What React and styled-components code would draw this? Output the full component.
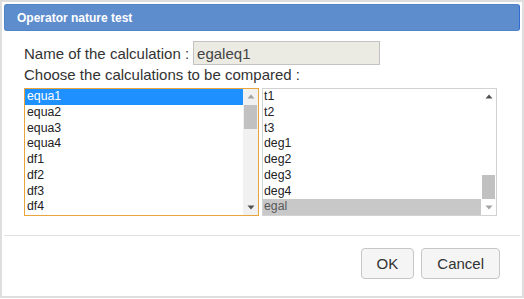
import React from 'react';
import styled, { createGlobalStyle } from 'styled-components';

const GlobalStyle = createGlobalStyle`
  html, body { margin: 0; padding: 0; background: #fff; }
  body { font-family: "Liberation Sans", Arial, sans-serif; }
  #root { width: 524px; height: 299px; }
`;

const Dialog = styled.div`
  box-sizing: border-box;
  width: 524px;
  height: 298px;
  border: 2px solid #dedede;
  padding: 2px;
  background: #fff;
  display: flex;
  flex-direction: column;
`;

const TitleBar = styled.div`
  box-sizing: border-box;
  height: 27px;
  background: #5e8dce;
  border: 1px solid #5284c9;
  border-right-color: #2f6dd0;
  border-radius: 3px;
  padding-left: 12px;
  display: flex;
  align-items: center;
  color: #fff;
  font-weight: bold;
  font-size: 12px;
`;

const Body = styled.div`
  padding: 10px 20px 0 20px;
  display: flex;
  flex-direction: column;
`;

const NameRow = styled.div`
  display: flex;
  align-items: center;
  height: 24px;
`;

const Label = styled.span`
  font-size: 15px;
  color: #333;
  line-height: 17px;
  white-space: nowrap;
`;

const ChooseLabel = styled(Label)`
  display: block;
  margin-top: 1px;
`;

const NameInput = styled.div`
  box-sizing: border-box;
  margin-left: 4px;
  width: 187px;
  height: 24px;
  border: 1px solid #c3c3c3;
  background: #ebebe4;
  font-size: 15px;
  color: #444;
  padding-left: 3px;
  display: flex;
  align-items: center;
`;

const ListsRow = styled.div`
  display: flex;
  gap: 3px;
  margin-top: 5px;
`;

const ListBox = styled.div`
  box-sizing: border-box;
  width: 235px;
  height: 128px;
  border: 1px solid ${p => (p.$focused ? '#e9a43c' : '#d2d2d2')};
  display: flex;
  background: #fff;
`;

const Items = styled.div`
  flex: 1;
  display: flex;
  flex-direction: column;
  overflow: hidden;
`;

const Item = styled.div`
  height: 15.75px;
  line-height: 15.75px;
  font-size: 12.3px;
  padding-left: ${p => p.$indent}px;
  white-space: nowrap;
  color: ${p => (p.$selected ? (p.$focused ? '#fff' : '#5a5a5a') : '#222')};
  background: ${p => (p.$selected ? (p.$focused ? '#1e90ff' : '#c8c8c8') : 'transparent')};
`;

const Scrollbar = styled.div`
  width: 15px;
  display: flex;
  flex-direction: column;
  background: ${p => (p.$focused ? '#f1f1f1' : '#fff')};
`;

const ArrowBtn = styled.div`
  height: 15px;
  display: flex;
  align-items: center;
  justify-content: center;
`;

const Track = styled.div`
  flex: 1;
  display: flex;
  flex-direction: column;
  justify-content: ${p => (p.$atEnd ? 'flex-end' : 'flex-start')};
  padding: 1px 0;
`;

const Thumb = styled.div`
  height: 24px;
  margin: 0 1px;
  background: #c1c1c1;
`;

const Separator = styled.div`
  height: 1px;
  background: #e2e2e2;
  margin-top: 19px;
`;

const Footer = styled.div`
  display: flex;
  justify-content: flex-end;
  gap: 7px;
  padding: 12px 20px 0 0;
`;

const Button = styled.button`
  box-sizing: border-box;
  height: 31px;
  padding: 0 15px;
  border: 1px solid #c6c6c6;
  border-radius: 4px;
  background: #f5f5f5;
  font-family: "Liberation Sans", Arial, sans-serif;
  font-size: 15px;
  color: #333;
`;

const Arrow = ({ up, dark }) => (
  <svg width="8" height="5" viewBox="0 0 8 5">
    <polygon
      points={up ? '0.5,4.5 7.5,4.5 4,0.5' : '0.5,0.5 7.5,0.5 4,4.5'}
      fill={dark ? '#505050' : '#a3a3a3'}
    />
  </svg>
);

const List = ({ items, selected, focused, atEnd, indent }) => (
  <ListBox $focused={focused}>
    <Items>
      {items.map(it => (
        <Item key={it} $indent={indent} $selected={it === selected} $focused={focused}>
          {it}
        </Item>
      ))}
    </Items>
    <Scrollbar $focused={focused}>
      <ArrowBtn>
        <Arrow up dark={atEnd} />
      </ArrowBtn>
      <Track $atEnd={atEnd}>
        <Thumb />
      </Track>
      <ArrowBtn>
        <Arrow dark={!atEnd} />
      </ArrowBtn>
    </Scrollbar>
  </ListBox>
);

export default function App() {
  return (
    <>
      <GlobalStyle />
      <Dialog>
        <TitleBar>Operator nature test</TitleBar>
        <Body>
          <NameRow>
            <Label>Name of the calculation :</Label>
            <NameInput>egaleq1</NameInput>
          </NameRow>
          <ChooseLabel>Choose the calculations to be compared :</ChooseLabel>
          <ListsRow>
            <List
              items={['equa1', 'equa2', 'equa3', 'equa4', 'df1', 'df2', 'df3', 'df4']}
              selected="equa1"
              focused
              indent={2}
            />
            <List
              items={['t1', 't2', 't3', 'deg1', 'deg2', 'deg3', 'deg4', 'egal']}
              selected="egal"
              atEnd
              indent={1}
            />
          </ListsRow>
        </Body>
        <Separator />
        <Footer>
          <Button>OK</Button>
          <Button>Cancel</Button>
        </Footer>
      </Dialog>
    </>
  );
}
